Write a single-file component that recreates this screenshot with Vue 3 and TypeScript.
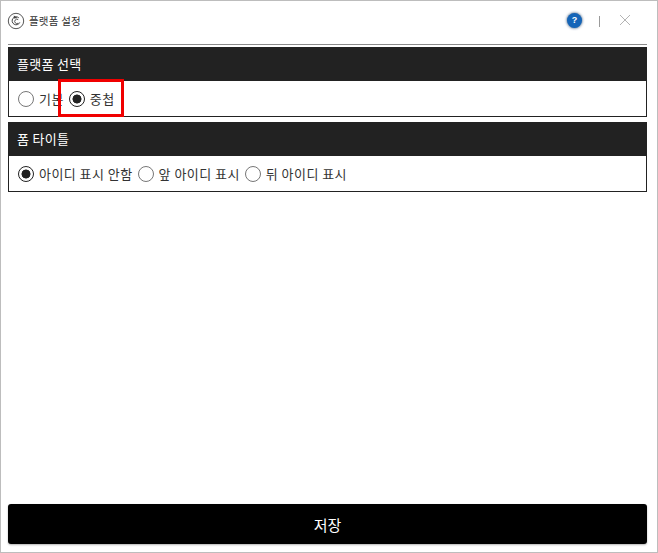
<script setup lang="ts">
interface Opt { label: string; checked: boolean }
const platform: Opt[] = [
  { label: '기본', checked: false },
  { label: '중첩', checked: true },
]
const formTitle: Opt[] = [
  { label: '아이디 표시 안함', checked: true },
  { label: '앞 아이디 표시', checked: false },
  { label: '뒤 아이디 표시', checked: false },
]
</script>

<template>
  <div class="window">
    <header class="titlebar">
      <svg class="logo" width="18" height="18" viewBox="0 0 18 18" fill="none" stroke="#444">
        <circle cx="9" cy="9" r="7.7" stroke-width="0.9" />
        <path d="M12.8 10.4a4 4 0 1 1-1-4.6" stroke-width="1" />
        <path d="M11.2 11.2a2.2 2.2 0 1 1 0-3.6" stroke-width="0.9" />
        <path d="M6.8 3.4 10.6 6 7 6.6Z" fill="#444" stroke="none" />
      </svg>
      <span class="title">플랫폼 설정</span>
      <span class="help">?</span>
      <span class="divider"></span>
      <svg class="close" width="12" height="12" viewBox="0 0 12 12" stroke="#b4b4b4" stroke-width="1">
        <path d="M1 1l10 10M11 1 1 11" />
      </svg>
    </header>

    <main class="content">
      <section class="section">
        <h2 class="head">플랫폼 선택</h2>
        <div class="body">
          <label v-for="o in platform" :key="o.label" class="opt">
            <span class="radio" :class="{ on: o.checked }"></span>{{ o.label }}
          </label>
        </div>
        <div class="mark"></div>
      </section>

      <section class="section second">
        <h2 class="head">폼 타이틀</h2>
        <div class="body">
          <label v-for="o in formTitle" :key="o.label" class="opt">
            <span class="radio" :class="{ on: o.checked }"></span>{{ o.label }}
          </label>
        </div>
      </section>
    </main>

    <button class="save">저장</button>
  </div>
</template>

<style>
html, body { margin: 0; background: #fff; }
</style>

<style scoped>
.window {
  box-sizing: border-box;
  width: 658px;
  height: 553px;
  border: 1px solid #bdbdbd;
  padding: 0 10px 8px 7px;
  display: flex;
  flex-direction: column;
  background: #fff;
  font-family: "Noto Sans CJK KR", "Noto Sans", sans-serif;
  color: #222;
}
.titlebar {
  box-sizing: border-box;
  height: 44px;
  flex: none;
  display: flex;
  align-items: center;
  border-bottom: 1px solid #8a8a8a;
  padding-bottom: 4px;
}
.logo { margin-right: 4px; margin-left: -1px; flex: none; }
.title { font-size: 10.5px; letter-spacing: 0.2px; color: #333; }
.help {
  margin-left: auto;
  width: 15px;
  height: 15px;
  border-radius: 50%;
  background: #1565b8;
  box-shadow: 0 0 3px #1a3c66;
  color: #fff;
  font: bold 9px/15px "Liberation Sans", sans-serif;
  text-align: center;
}
.divider {
  width: 1px;
  height: 11px;
  background: #9a9a9a;
  margin: 2px 0 0 17px;
}
.close { margin-left: 19px; margin-right: 16px; margin-top: -2px; }
.content { flex: 1; padding-top: 2px; }
.section { position: relative; }
.second { margin-top: 5px; }
.head {
  box-sizing: border-box;
  height: 34px;
  margin: 0;
  padding-left: 9px;
  background: #222;
  color: #fff;
  font-size: 13px;
  font-weight: 400;
  line-height: 33px;
  letter-spacing: 0.3px;
}
.body {
  box-sizing: border-box;
  height: 36px;
  border: 1px solid #222;
  border-top: none;
  padding-left: 9px;
  display: flex;
  align-items: center;
  gap: 5px;
  font-size: 13px;
  letter-spacing: 0.45px;
  color: #333;
}
.opt { display: flex; align-items: center; white-space: nowrap; line-height: 20px; }
.radio {
  box-sizing: border-box;
  width: 16px;
  height: 16px;
  border: 1.5px solid #777;
  border-radius: 50%;
  margin-right: 5px;
  flex: none;
  background: #fff;
}
.radio.on {
  border-color: #222;
  background: radial-gradient(circle, #222 0 4.2px, #fff 4.8px);
}
.mark {
  position: absolute;
  left: 50px;
  top: 32px;
  width: 66px;
  height: 38px;
  box-sizing: border-box;
  border: 3px solid #f00000;
}
.save {
  flex: none;
  height: 40px;
  border: none;
  border-radius: 3px;
  background: #000;
  box-shadow: 0 1px 2px rgba(0, 0, 0, 0.3);
  color: #fff;
  font-family: inherit;
  font-size: 15px;
  padding: 0;
}
</style>
